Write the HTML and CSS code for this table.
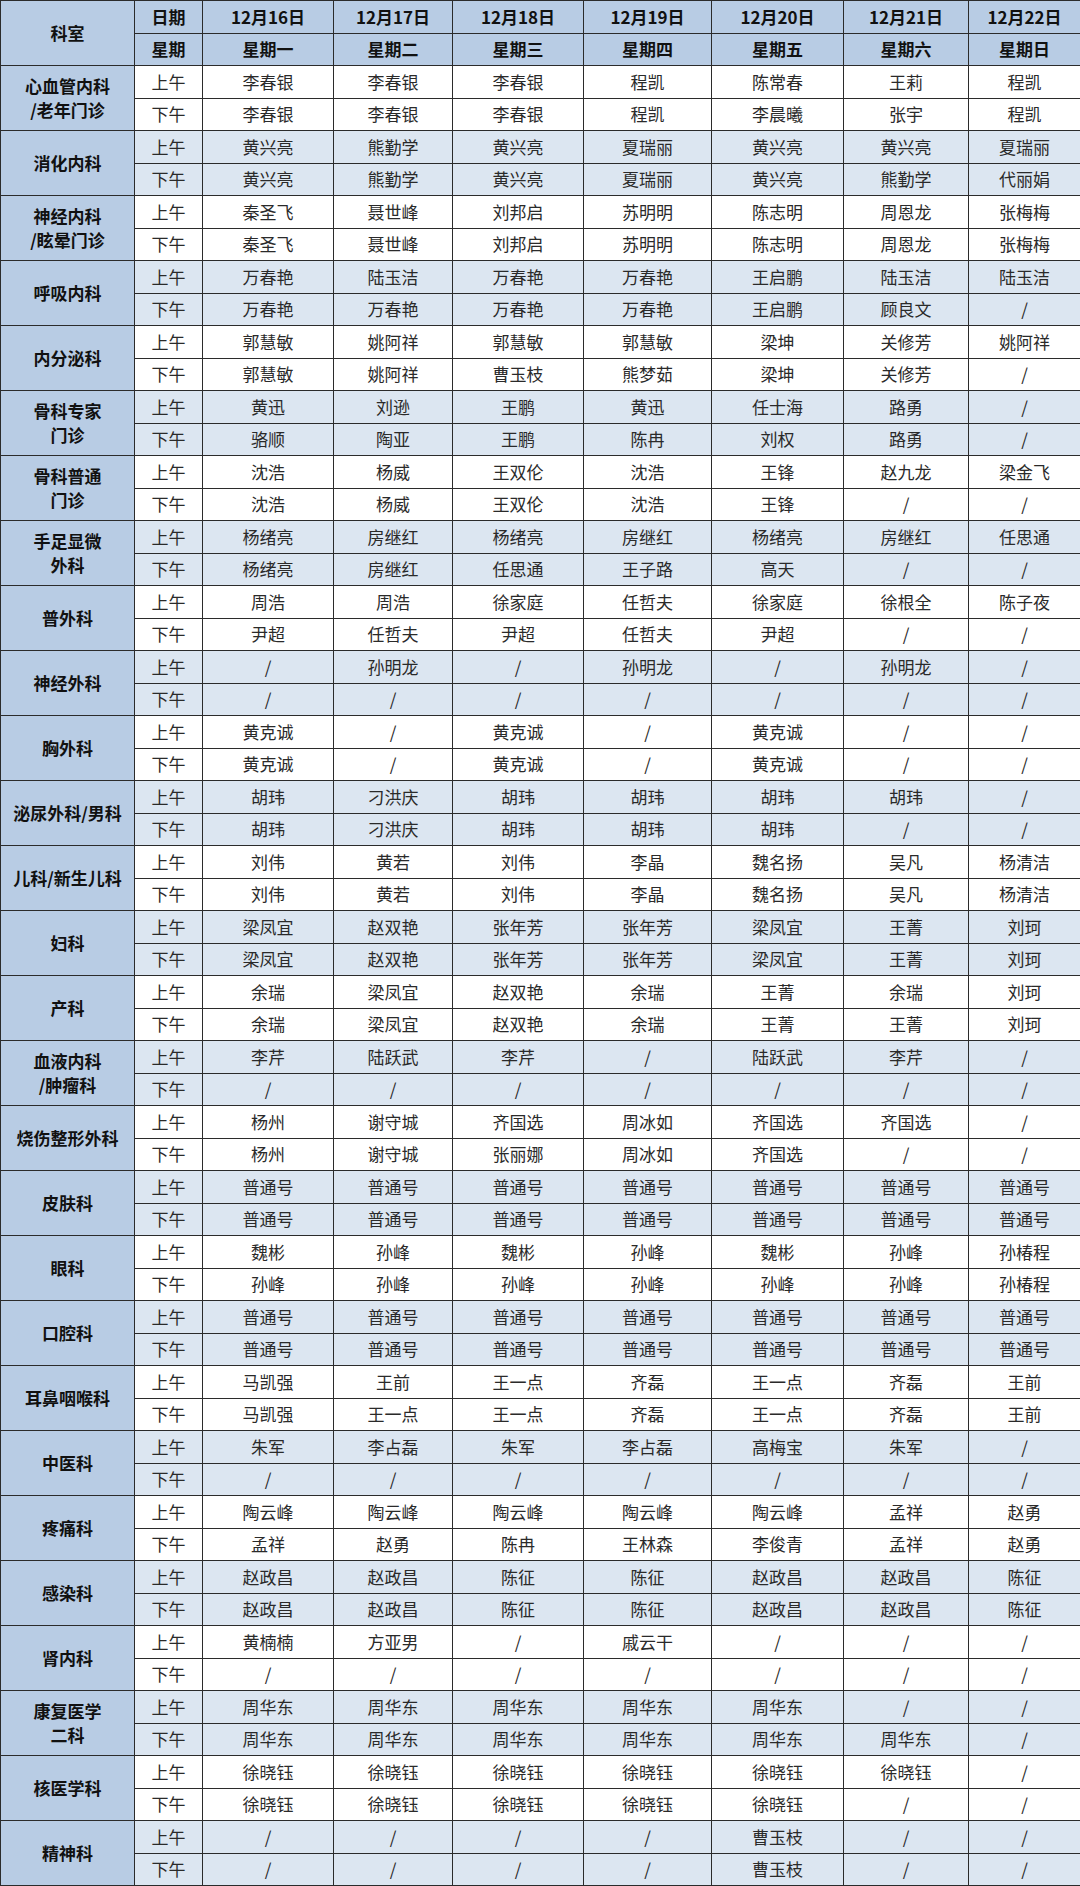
FILE: index.html
```html
<!DOCTYPE html>
<html lang="zh-CN">
<head>
<meta charset="utf-8">
<title>排班表</title>
<link rel="stylesheet" href="styles.css">
</head>
<body>
<table class="sched">
<colgroup>
<col class="c-dept"><col class="c-per"><col class="c-d1"><col class="c-d2"><col class="c-d3"><col class="c-d4"><col class="c-d5"><col class="c-d6"><col class="c-d7">
</colgroup>
<thead>
<tr><th rowspan="2" class="dept">科室</th><th>日期</th><th>12月16日</th><th>12月17日</th><th>12月18日</th><th>12月19日</th><th>12月20日</th><th>12月21日</th><th>12月22日</th></tr>
<tr><th>星期</th><th>星期一</th><th>星期二</th><th>星期三</th><th>星期四</th><th>星期五</th><th>星期六</th><th>星期日</th></tr>
</thead>
<tbody class="w">
<tr><th rowspan="2" class="dept">心血管内科<br>/老年门诊</th><td>上午</td><td>李春银</td><td>李春银</td><td>李春银</td><td>程凯</td><td>陈常春</td><td>王莉</td><td>程凯</td></tr>
<tr class="pm"><td>下午</td><td>李春银</td><td>李春银</td><td>李春银</td><td>程凯</td><td>李晨曦</td><td>张宇</td><td>程凯</td></tr>
</tbody>
<tbody class="b">
<tr><th rowspan="2" class="dept">消化内科</th><td>上午</td><td>黄兴亮</td><td>熊勤学</td><td>黄兴亮</td><td>夏瑞丽</td><td>黄兴亮</td><td>黄兴亮</td><td>夏瑞丽</td></tr>
<tr class="pm"><td>下午</td><td>黄兴亮</td><td>熊勤学</td><td>黄兴亮</td><td>夏瑞丽</td><td>黄兴亮</td><td>熊勤学</td><td>代丽娟</td></tr>
</tbody>
<tbody class="w">
<tr><th rowspan="2" class="dept">神经内科<br>/眩晕门诊</th><td>上午</td><td>秦圣飞</td><td>聂世峰</td><td>刘邦启</td><td>苏明明</td><td>陈志明</td><td>周恩龙</td><td>张梅梅</td></tr>
<tr class="pm"><td>下午</td><td>秦圣飞</td><td>聂世峰</td><td>刘邦启</td><td>苏明明</td><td>陈志明</td><td>周恩龙</td><td>张梅梅</td></tr>
</tbody>
<tbody class="b">
<tr><th rowspan="2" class="dept">呼吸内科</th><td>上午</td><td>万春艳</td><td>陆玉洁</td><td>万春艳</td><td>万春艳</td><td>王启鹏</td><td>陆玉洁</td><td>陆玉洁</td></tr>
<tr class="pm"><td>下午</td><td>万春艳</td><td>万春艳</td><td>万春艳</td><td>万春艳</td><td>王启鹏</td><td>顾良文</td><td>/</td></tr>
</tbody>
<tbody class="w">
<tr><th rowspan="2" class="dept">内分泌科</th><td>上午</td><td>郭慧敏</td><td>姚阿祥</td><td>郭慧敏</td><td>郭慧敏</td><td>梁坤</td><td>关修芳</td><td>姚阿祥</td></tr>
<tr class="pm"><td>下午</td><td>郭慧敏</td><td>姚阿祥</td><td>曹玉枝</td><td>熊梦茹</td><td>梁坤</td><td>关修芳</td><td>/</td></tr>
</tbody>
<tbody class="b">
<tr><th rowspan="2" class="dept">骨科专家<br>门诊</th><td>上午</td><td>黄迅</td><td>刘逊</td><td>王鹏</td><td>黄迅</td><td>任士海</td><td>路勇</td><td>/</td></tr>
<tr class="pm"><td>下午</td><td>骆顺</td><td>陶亚</td><td>王鹏</td><td>陈冉</td><td>刘权</td><td>路勇</td><td>/</td></tr>
</tbody>
<tbody class="w">
<tr><th rowspan="2" class="dept">骨科普通<br>门诊</th><td>上午</td><td>沈浩</td><td>杨威</td><td>王双伦</td><td>沈浩</td><td>王锋</td><td>赵九龙</td><td>梁金飞</td></tr>
<tr class="pm"><td>下午</td><td>沈浩</td><td>杨威</td><td>王双伦</td><td>沈浩</td><td>王锋</td><td>/</td><td>/</td></tr>
</tbody>
<tbody class="b">
<tr><th rowspan="2" class="dept">手足显微<br>外科</th><td>上午</td><td>杨绪亮</td><td>房继红</td><td>杨绪亮</td><td>房继红</td><td>杨绪亮</td><td>房继红</td><td>任思通</td></tr>
<tr class="pm"><td>下午</td><td>杨绪亮</td><td>房继红</td><td>任思通</td><td>王子路</td><td>高天</td><td>/</td><td>/</td></tr>
</tbody>
<tbody class="w">
<tr><th rowspan="2" class="dept">普外科</th><td>上午</td><td>周浩</td><td>周浩</td><td>徐家庭</td><td>任哲夫</td><td>徐家庭</td><td>徐根全</td><td>陈子夜</td></tr>
<tr class="pm"><td>下午</td><td>尹超</td><td>任哲夫</td><td>尹超</td><td>任哲夫</td><td>尹超</td><td>/</td><td>/</td></tr>
</tbody>
<tbody class="b">
<tr><th rowspan="2" class="dept">神经外科</th><td>上午</td><td>/</td><td>孙明龙</td><td>/</td><td>孙明龙</td><td>/</td><td>孙明龙</td><td>/</td></tr>
<tr class="pm"><td>下午</td><td>/</td><td>/</td><td>/</td><td>/</td><td>/</td><td>/</td><td>/</td></tr>
</tbody>
<tbody class="w">
<tr><th rowspan="2" class="dept">胸外科</th><td>上午</td><td>黄克诚</td><td>/</td><td>黄克诚</td><td>/</td><td>黄克诚</td><td>/</td><td>/</td></tr>
<tr class="pm"><td>下午</td><td>黄克诚</td><td>/</td><td>黄克诚</td><td>/</td><td>黄克诚</td><td>/</td><td>/</td></tr>
</tbody>
<tbody class="b">
<tr><th rowspan="2" class="dept">泌尿外科/男科</th><td>上午</td><td>胡玮</td><td>刁洪庆</td><td>胡玮</td><td>胡玮</td><td>胡玮</td><td>胡玮</td><td>/</td></tr>
<tr class="pm"><td>下午</td><td>胡玮</td><td>刁洪庆</td><td>胡玮</td><td>胡玮</td><td>胡玮</td><td>/</td><td>/</td></tr>
</tbody>
<tbody class="w">
<tr><th rowspan="2" class="dept">儿科/新生儿科</th><td>上午</td><td>刘伟</td><td>黄若</td><td>刘伟</td><td>李晶</td><td>魏名扬</td><td>吴凡</td><td>杨清洁</td></tr>
<tr class="pm"><td>下午</td><td>刘伟</td><td>黄若</td><td>刘伟</td><td>李晶</td><td>魏名扬</td><td>吴凡</td><td>杨清洁</td></tr>
</tbody>
<tbody class="b">
<tr><th rowspan="2" class="dept">妇科</th><td>上午</td><td>梁凤宜</td><td>赵双艳</td><td>张年芳</td><td>张年芳</td><td>梁凤宜</td><td>王菁</td><td>刘珂</td></tr>
<tr class="pm"><td>下午</td><td>梁凤宜</td><td>赵双艳</td><td>张年芳</td><td>张年芳</td><td>梁凤宜</td><td>王菁</td><td>刘珂</td></tr>
</tbody>
<tbody class="w">
<tr><th rowspan="2" class="dept">产科</th><td>上午</td><td>余瑞</td><td>梁凤宜</td><td>赵双艳</td><td>余瑞</td><td>王菁</td><td>余瑞</td><td>刘珂</td></tr>
<tr class="pm"><td>下午</td><td>余瑞</td><td>梁凤宜</td><td>赵双艳</td><td>余瑞</td><td>王菁</td><td>王菁</td><td>刘珂</td></tr>
</tbody>
<tbody class="b">
<tr><th rowspan="2" class="dept">血液内科<br>/肿瘤科</th><td>上午</td><td>李芹</td><td>陆跃武</td><td>李芹</td><td>/</td><td>陆跃武</td><td>李芹</td><td>/</td></tr>
<tr class="pm"><td>下午</td><td>/</td><td>/</td><td>/</td><td>/</td><td>/</td><td>/</td><td>/</td></tr>
</tbody>
<tbody class="w">
<tr><th rowspan="2" class="dept">烧伤整形外科</th><td>上午</td><td>杨州</td><td>谢守城</td><td>齐国选</td><td>周冰如</td><td>齐国选</td><td>齐国选</td><td>/</td></tr>
<tr class="pm"><td>下午</td><td>杨州</td><td>谢守城</td><td>张丽娜</td><td>周冰如</td><td>齐国选</td><td>/</td><td>/</td></tr>
</tbody>
<tbody class="b">
<tr><th rowspan="2" class="dept">皮肤科</th><td>上午</td><td>普通号</td><td>普通号</td><td>普通号</td><td>普通号</td><td>普通号</td><td>普通号</td><td>普通号</td></tr>
<tr class="pm"><td>下午</td><td>普通号</td><td>普通号</td><td>普通号</td><td>普通号</td><td>普通号</td><td>普通号</td><td>普通号</td></tr>
</tbody>
<tbody class="w">
<tr><th rowspan="2" class="dept">眼科</th><td>上午</td><td>魏彬</td><td>孙峰</td><td>魏彬</td><td>孙峰</td><td>魏彬</td><td>孙峰</td><td>孙椿程</td></tr>
<tr class="pm"><td>下午</td><td>孙峰</td><td>孙峰</td><td>孙峰</td><td>孙峰</td><td>孙峰</td><td>孙峰</td><td>孙椿程</td></tr>
</tbody>
<tbody class="b">
<tr><th rowspan="2" class="dept">口腔科</th><td>上午</td><td>普通号</td><td>普通号</td><td>普通号</td><td>普通号</td><td>普通号</td><td>普通号</td><td>普通号</td></tr>
<tr class="pm"><td>下午</td><td>普通号</td><td>普通号</td><td>普通号</td><td>普通号</td><td>普通号</td><td>普通号</td><td>普通号</td></tr>
</tbody>
<tbody class="w">
<tr><th rowspan="2" class="dept">耳鼻咽喉科</th><td>上午</td><td>马凯强</td><td>王前</td><td>王一点</td><td>齐磊</td><td>王一点</td><td>齐磊</td><td>王前</td></tr>
<tr class="pm"><td>下午</td><td>马凯强</td><td>王一点</td><td>王一点</td><td>齐磊</td><td>王一点</td><td>齐磊</td><td>王前</td></tr>
</tbody>
<tbody class="b">
<tr><th rowspan="2" class="dept">中医科</th><td>上午</td><td>朱军</td><td>李占磊</td><td>朱军</td><td>李占磊</td><td>高梅宝</td><td>朱军</td><td>/</td></tr>
<tr class="pm"><td>下午</td><td>/</td><td>/</td><td>/</td><td>/</td><td>/</td><td>/</td><td>/</td></tr>
</tbody>
<tbody class="w">
<tr><th rowspan="2" class="dept">疼痛科</th><td>上午</td><td>陶云峰</td><td>陶云峰</td><td>陶云峰</td><td>陶云峰</td><td>陶云峰</td><td>孟祥</td><td>赵勇</td></tr>
<tr class="pm"><td>下午</td><td>孟祥</td><td>赵勇</td><td>陈冉</td><td>王林森</td><td>李俊青</td><td>孟祥</td><td>赵勇</td></tr>
</tbody>
<tbody class="b">
<tr><th rowspan="2" class="dept">感染科</th><td>上午</td><td>赵政昌</td><td>赵政昌</td><td>陈征</td><td>陈征</td><td>赵政昌</td><td>赵政昌</td><td>陈征</td></tr>
<tr class="pm"><td>下午</td><td>赵政昌</td><td>赵政昌</td><td>陈征</td><td>陈征</td><td>赵政昌</td><td>赵政昌</td><td>陈征</td></tr>
</tbody>
<tbody class="w">
<tr><th rowspan="2" class="dept">肾内科</th><td>上午</td><td>黄楠楠</td><td>方亚男</td><td>/</td><td>戚云干</td><td>/</td><td>/</td><td>/</td></tr>
<tr class="pm"><td>下午</td><td>/</td><td>/</td><td>/</td><td>/</td><td>/</td><td>/</td><td>/</td></tr>
</tbody>
<tbody class="b">
<tr><th rowspan="2" class="dept">康复医学<br>二科</th><td>上午</td><td>周华东</td><td>周华东</td><td>周华东</td><td>周华东</td><td>周华东</td><td>/</td><td>/</td></tr>
<tr class="pm"><td>下午</td><td>周华东</td><td>周华东</td><td>周华东</td><td>周华东</td><td>周华东</td><td>周华东</td><td>/</td></tr>
</tbody>
<tbody class="w">
<tr><th rowspan="2" class="dept">核医学科</th><td>上午</td><td>徐晓钰</td><td>徐晓钰</td><td>徐晓钰</td><td>徐晓钰</td><td>徐晓钰</td><td>徐晓钰</td><td>/</td></tr>
<tr class="pm"><td>下午</td><td>徐晓钰</td><td>徐晓钰</td><td>徐晓钰</td><td>徐晓钰</td><td>徐晓钰</td><td>/</td><td>/</td></tr>
</tbody>
<tbody class="b">
<tr><th rowspan="2" class="dept">精神科</th><td>上午</td><td>/</td><td>/</td><td>/</td><td>/</td><td>曹玉枝</td><td>/</td><td>/</td></tr>
<tr class="pm"><td>下午</td><td>/</td><td>/</td><td>/</td><td>/</td><td>曹玉枝</td><td>/</td><td>/</td></tr>
</tbody>
</table>
</body>
</html>
```

FILE: styles.css
```css
html, body {
  margin: 0;
  padding: 0;
  background: #ffffff;
}
body {
  font-family: "Noto Sans CJK SC", "Noto Sans", sans-serif;
  color: #2a2a2a;
}
.sched {
  width: 1080px;
  border-collapse: collapse;
  table-layout: fixed;
  font-size: 17px;
}
.c-dept { width: 134px; }
.c-per { width: 68px; }
.c-d1 { width: 131px; }
.c-d2 { width: 119px; }
.c-d3 { width: 131px; }
.c-d4 { width: 128px; }
.c-d5 { width: 132px; }
.c-d6 { width: 125px; }
.c-d7 { width: 112px; }
.sched tr {
  height: 32.5px;
}
.sched th,
.sched td {
  border: 1px solid #2b2b2b;
  padding: 0;
  text-align: center;
  vertical-align: middle;
  line-height: 20px;
  white-space: nowrap;
}
.sched thead th {
  background: #b8cce4;
  font-weight: 700;
  color: #111111;
}
.sched th.dept {
  background: #b8cce4;
  font-weight: 700;
  color: #111111;
  line-height: 24px;
}
.sched tbody.b td {
  background: #dce6f1;
}
.sched tbody.w td {
  background: #ffffff;
}
.sched tr.pm td {
  border-top-color: #4a4a4a;
}
```
